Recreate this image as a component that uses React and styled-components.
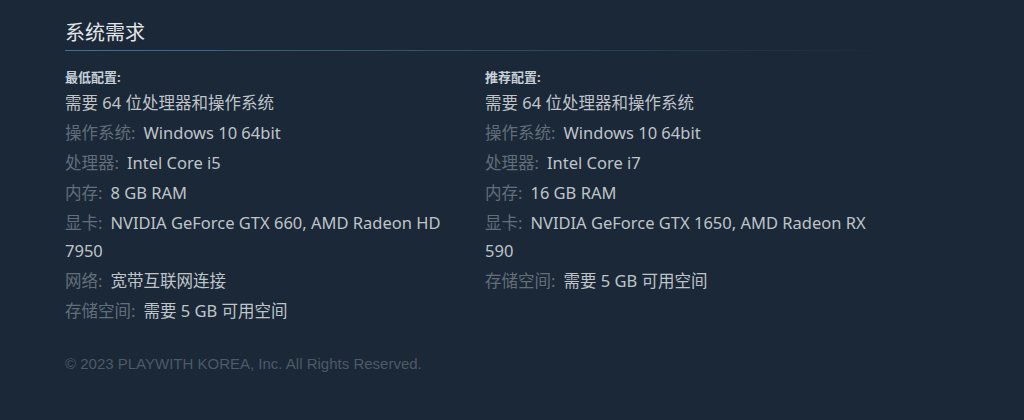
import React from "react";
import styled, { createGlobalStyle } from "styled-components";

const GlobalStyle = createGlobalStyle`
  html, body {
    margin: 0;
    background: #1b2838;
  }
  body {
    font-family: "Noto Sans", "Noto Sans CJK SC", sans-serif;
  }
`;

const minimum = [
  { value: "需要 64 位处理器和操作系统" },
  { label: "操作系统", value: "Windows 10 64bit" },
  { label: "处理器", value: "Intel Core i5" },
  { label: "内存", value: "8 GB RAM" },
  { label: "显卡", value: "NVIDIA GeForce GTX 660, AMD Radeon HD 7950" },
  { label: "网络", value: "宽带互联网连接" },
  { label: "存储空间", value: "需要 5 GB 可用空间" },
];

const recommended = [
  { value: "需要 64 位处理器和操作系统" },
  { label: "操作系统", value: "Windows 10 64bit" },
  { label: "处理器", value: "Intel Core i7" },
  { label: "内存", value: "16 GB RAM" },
  { label: "显卡", value: "NVIDIA GeForce GTX 1650, AMD Radeon RX 590" },
  { label: "存储空间", value: "需要 5 GB 可用空间" },
];

function ReqColumn({ title, items }) {
  return (
    <Column>
      <ColumnTitle>{title}:</ColumnTitle>
      <List>
        {items.map((item, i) => (
          <Row key={i} $first={i === 0}>
            {item.label && <Label>{item.label}:</Label>}
            <Value>{item.value}</Value>
          </Row>
        ))}
      </List>
    </Column>
  );
}

export default function App() {
  return (
    <>
      <GlobalStyle />
      <Section>
        <Title>系统需求</Title>
        <Columns>
          <ReqColumn title="最低配置" items={minimum} />
          <ReqColumn title="推荐配置" items={recommended} />
        </Columns>
        <Copyright>© 2023 PLAYWITH KOREA, Inc. All Rights Reserved.</Copyright>
      </Section>
    </>
  );
}

const Section = styled.div`
  width: 820px;
  padding: 20px 0 40px 65px;
`;

const Title = styled.h2`
  margin: 0;
  padding-bottom: 5px;
  font-size: 20px;
  line-height: 26px;
  font-weight: normal;
  color: #e2e5e8;
  background-image: linear-gradient(
    to right,
    #3f7395 0%,
    rgba(63, 115, 149, 0.55) 45%,
    rgba(63, 115, 149, 0) 100%
  );
  background-repeat: no-repeat;
  background-position: left bottom;
  background-size: 100% 1px;
`;

const Columns = styled.div`
  display: grid;
  grid-template-columns: 400px 400px;
  column-gap: 20px;
  align-items: start;
  margin-top: 18px;
`;

const Column = styled.div`
  display: flex;
  flex-direction: column;
`;

const ColumnTitle = styled.div`
  font-size: 13px;
  line-height: 16px;
  font-weight: bold;
  color: #c6d0d8;
  margin-bottom: 4px;
`;

const List = styled.ul`
  list-style: none;
  margin: 0;
  padding: 0;
`;

const Row = styled.li`
  font-size: 16.5px;
  line-height: 28px;
  margin-top: ${(p) => (p.$first ? "0" : "2px")};
  color: #bfc4c9;
`;

const Label = styled.span`
  color: #626e7a;
  margin-right: 8px;
`;

const Value = styled.span`
  color: #bfc4c9;
`;

const Copyright = styled.div`
  margin-top: 29px;
  font-family: "Liberation Sans", Arial, sans-serif;
  font-size: 15px;
  line-height: 20px;
  color: #4d5a67;
`;
